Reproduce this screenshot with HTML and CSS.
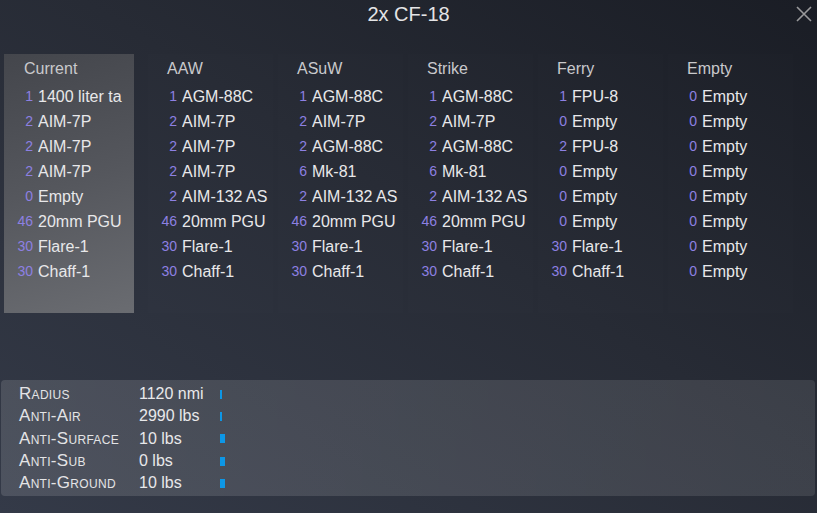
FILE: index.html
```html
<!DOCTYPE html>
<html lang="en">
<head>
  <meta charset="UTF-8" />
  <meta name="viewport" content="width=device-width, initial-scale=1.0"/>
  <title>Loadout</title>
  <link rel="stylesheet" href="styles.css">
</head>
<body>
<div class="window">
  <div class="title-bar">
    <h2>2x CF-18</h2>
    <button class="close-btn" title="Close">
      <svg width="16" height="16" viewBox="0 0 16 16">
        <path d="M1 1 L15 15 M15 1 L1 15" stroke="#9a9a9c" stroke-width="1.6" fill="none"/>
      </svg>
    </button>
  </div>

  <div class="loadouts">
    <div class="loadout current">
      <h4>Current</h4>
      <div class="slot"><span class="qty">1</span><span class="name">1400 liter ta</span></div>
      <div class="slot"><span class="qty">2</span><span class="name">AIM-7P</span></div>
      <div class="slot"><span class="qty">2</span><span class="name">AIM-7P</span></div>
      <div class="slot"><span class="qty">2</span><span class="name">AIM-7P</span></div>
      <div class="slot"><span class="qty">0</span><span class="name">Empty</span></div>
      <div class="slot"><span class="qty">46</span><span class="name">20mm PGU</span></div>
      <div class="slot"><span class="qty">30</span><span class="name">Flare-1</span></div>
      <div class="slot"><span class="qty">30</span><span class="name">Chaff-1</span></div>
    </div>

    <div class="loadout">
      <h4>AAW</h4>
      <div class="slot"><span class="qty">1</span><span class="name">AGM-88C</span></div>
      <div class="slot"><span class="qty">2</span><span class="name">AIM-7P</span></div>
      <div class="slot"><span class="qty">2</span><span class="name">AIM-7P</span></div>
      <div class="slot"><span class="qty">2</span><span class="name">AIM-7P</span></div>
      <div class="slot"><span class="qty">2</span><span class="name">AIM-132 AS</span></div>
      <div class="slot"><span class="qty">46</span><span class="name">20mm PGU</span></div>
      <div class="slot"><span class="qty">30</span><span class="name">Flare-1</span></div>
      <div class="slot"><span class="qty">30</span><span class="name">Chaff-1</span></div>
    </div>

    <div class="loadout">
      <h4>ASuW</h4>
      <div class="slot"><span class="qty">1</span><span class="name">AGM-88C</span></div>
      <div class="slot"><span class="qty">2</span><span class="name">AIM-7P</span></div>
      <div class="slot"><span class="qty">2</span><span class="name">AGM-88C</span></div>
      <div class="slot"><span class="qty">6</span><span class="name">Mk-81</span></div>
      <div class="slot"><span class="qty">2</span><span class="name">AIM-132 AS</span></div>
      <div class="slot"><span class="qty">46</span><span class="name">20mm PGU</span></div>
      <div class="slot"><span class="qty">30</span><span class="name">Flare-1</span></div>
      <div class="slot"><span class="qty">30</span><span class="name">Chaff-1</span></div>
    </div>

    <div class="loadout">
      <h4>Strike</h4>
      <div class="slot"><span class="qty">1</span><span class="name">AGM-88C</span></div>
      <div class="slot"><span class="qty">2</span><span class="name">AIM-7P</span></div>
      <div class="slot"><span class="qty">2</span><span class="name">AGM-88C</span></div>
      <div class="slot"><span class="qty">6</span><span class="name">Mk-81</span></div>
      <div class="slot"><span class="qty">2</span><span class="name">AIM-132 AS</span></div>
      <div class="slot"><span class="qty">46</span><span class="name">20mm PGU</span></div>
      <div class="slot"><span class="qty">30</span><span class="name">Flare-1</span></div>
      <div class="slot"><span class="qty">30</span><span class="name">Chaff-1</span></div>
    </div>

    <div class="loadout">
      <h4>Ferry</h4>
      <div class="slot"><span class="qty">1</span><span class="name">FPU-8</span></div>
      <div class="slot"><span class="qty">0</span><span class="name">Empty</span></div>
      <div class="slot"><span class="qty">2</span><span class="name">FPU-8</span></div>
      <div class="slot"><span class="qty">0</span><span class="name">Empty</span></div>
      <div class="slot"><span class="qty">0</span><span class="name">Empty</span></div>
      <div class="slot"><span class="qty">0</span><span class="name">Empty</span></div>
      <div class="slot"><span class="qty">30</span><span class="name">Flare-1</span></div>
      <div class="slot"><span class="qty">30</span><span class="name">Chaff-1</span></div>
    </div>

    <div class="loadout">
      <h4>Empty</h4>
      <div class="slot"><span class="qty">0</span><span class="name">Empty</span></div>
      <div class="slot"><span class="qty">0</span><span class="name">Empty</span></div>
      <div class="slot"><span class="qty">0</span><span class="name">Empty</span></div>
      <div class="slot"><span class="qty">0</span><span class="name">Empty</span></div>
      <div class="slot"><span class="qty">0</span><span class="name">Empty</span></div>
      <div class="slot"><span class="qty">0</span><span class="name">Empty</span></div>
      <div class="slot"><span class="qty">0</span><span class="name">Empty</span></div>
      <div class="slot"><span class="qty">0</span><span class="name">Empty</span></div>
    </div>
  </div>

  <div class="stats">
    <div class="stat"><span class="label">Radius</span><span class="value">1120 nmi</span><span class="bar" style="width: 2px"></span></div>
    <div class="stat"><span class="label">Anti-Air</span><span class="value">2990 lbs</span><span class="bar" style="width: 2px"></span></div>
    <div class="stat"><span class="label">Anti-Surface</span><span class="value">10 lbs</span><span class="bar" style="width: 5px"></span></div>
    <div class="stat"><span class="label">Anti-Sub</span><span class="value">0 lbs</span><span class="bar" style="width: 5px"></span></div>
    <div class="stat"><span class="label">Anti-Ground</span><span class="value">10 lbs</span><span class="bar" style="width: 5px"></span></div>
  </div>
</div>
</body>
</html>
```

FILE: styles.css
```css
:root {
  --text: #e8e8ea;
  --heading: #c9c9cc;
  --qty: #8d80e2;
  --bar: #0d97e6;
}

body {
  margin: 0;
  font-family: "Liberation Sans", Arial, sans-serif;
  color: var(--text);
  background: #23262f;
}

.window {
  width: 817px;
  height: 513px;
  background: linear-gradient(to top right, #343a48 0%, #272b35 55%, #1a1d25 100%);
  overflow: hidden;
}

.title-bar {
  position: relative;
  height: 54px;
}

.title-bar h2 {
  margin: 0;
  font-size: 20px;
  font-weight: normal;
  line-height: 28px;
  text-align: center;
  color: #e4e4e6;
}

.close-btn {
  position: absolute;
  top: 6px;
  right: 5px;
  padding: 0;
  border: none;
  background: none;
  cursor: pointer;
}

.close-btn svg {
  display: block;
}

/* loadout columns */
.loadouts {
  display: flex;
  gap: 5px;
  padding-left: 4px;
}

.loadout {
  width: 125px;
  height: 259px;
  box-sizing: border-box;
  padding-top: 4px;
  background: rgba(255, 255, 255, 0.007);
}

.loadout.current {
  width: 130px;
  margin-right: 9px;
  background: linear-gradient(165deg, #44464c 0%, #55575d 50%, #6a6c71 100%);
}

.loadout h4 {
  margin: 0 0 4px;
  padding-left: 19px;
  font-size: 16px;
  font-weight: normal;
  line-height: 22px;
  color: var(--heading);
}

.loadout.current h4 {
  padding-left: 20px;
}

.slot {
  display: grid;
  grid-template-columns: 24px 88px;
  column-gap: 5px;
  padding-left: 5px;
  line-height: 25px;
  white-space: nowrap;
}

.qty {
  text-align: right;
  font-size: 14px;
  color: var(--qty);
}

.name {
  font-size: 16px;
  overflow: hidden;
}

/* aircraft stats */
.stats {
  margin: 67px 2px 0 1px;
  padding: 3px 0 2px 18px;
  border-radius: 4px;
  background: linear-gradient(to left, rgba(255, 255, 255, 0.1), rgba(255, 255, 255, 0.13));
}

.stat {
  display: flex;
  align-items: center;
  height: 22.3px;
}

.label {
  width: 120px;
  font-size: 17px;
  font-variant: small-caps;
  letter-spacing: 0.3px;
  color: #e4e4e6;
}

.value {
  width: 80px;
  font-size: 16px;
}

.bar {
  height: 9px;
  margin-left: 1px;
  background: var(--bar);
}
```
